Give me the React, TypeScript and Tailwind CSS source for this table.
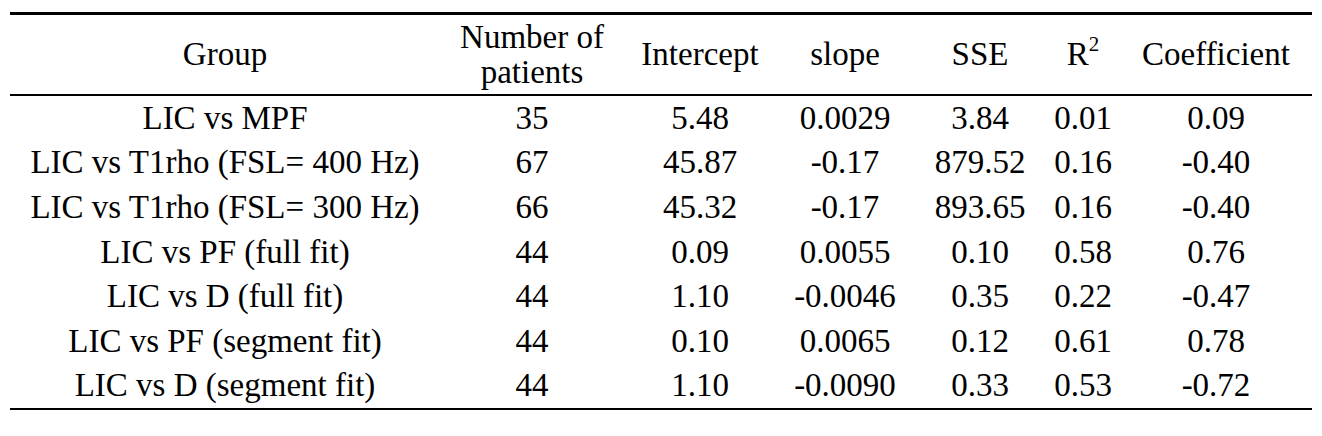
import React from "react";

const rows: string[][] = [
  ["LIC vs MPF", "35", "5.48", "0.0029", "3.84", "0.01", "0.09"],
  ["LIC vs T1rho (FSL= 400 Hz)", "67", "45.87", "-0.17", "879.52", "0.16", "-0.40"],
  ["LIC vs T1rho (FSL= 300 Hz)", "66", "45.32", "-0.17", "893.65", "0.16", "-0.40"],
  ["LIC vs PF (full fit)", "44", "0.09", "0.0055", "0.10", "0.58", "0.76"],
  ["LIC vs D (full fit)", "44", "1.10", "-0.0046", "0.35", "0.22", "-0.47"],
  ["LIC vs PF (segment fit)", "44", "0.10", "0.0065", "0.12", "0.61", "0.78"],
  ["LIC vs D (segment fit)", "44", "1.10", "-0.0090", "0.33", "0.53", "-0.72"],
];

const cols = "grid grid-cols-[430px_184px_152px_138px_132px_74px_192px]";

export default function App() {
  return (
    <div className="w-[1322px] h-[436px] bg-white pt-[12px] pl-[10px] text-black text-[33px] leading-none font-['Liberation_Serif','Times_New_Roman',serif]">
      <div className="w-[1302px] border-t-[3px] border-b-[2px] border-black">
        <div className={`${cols} h-[81px] border-b-[2px] border-black items-center text-center`}>
          <div>Group</div>
          <div className="flex flex-col items-center leading-[35px]">
            <span>Number of</span>
            <span>patients</span>
          </div>
          <div>Intercept</div>
          <div>slope</div>
          <div>SSE</div>
          <div>
            R<span className="text-[21px] align-top relative -top-[4px]">2</span>
          </div>
          <div>Coefficient</div>
        </div>
        {rows.map((r, i) => (
          <div key={i} className={`${cols} h-[44.6px] items-center text-center`}>
            {r.map((c, j) => (
              <div key={j}>{c}</div>
            ))}
          </div>
        ))}
      </div>
    </div>
  );
}
